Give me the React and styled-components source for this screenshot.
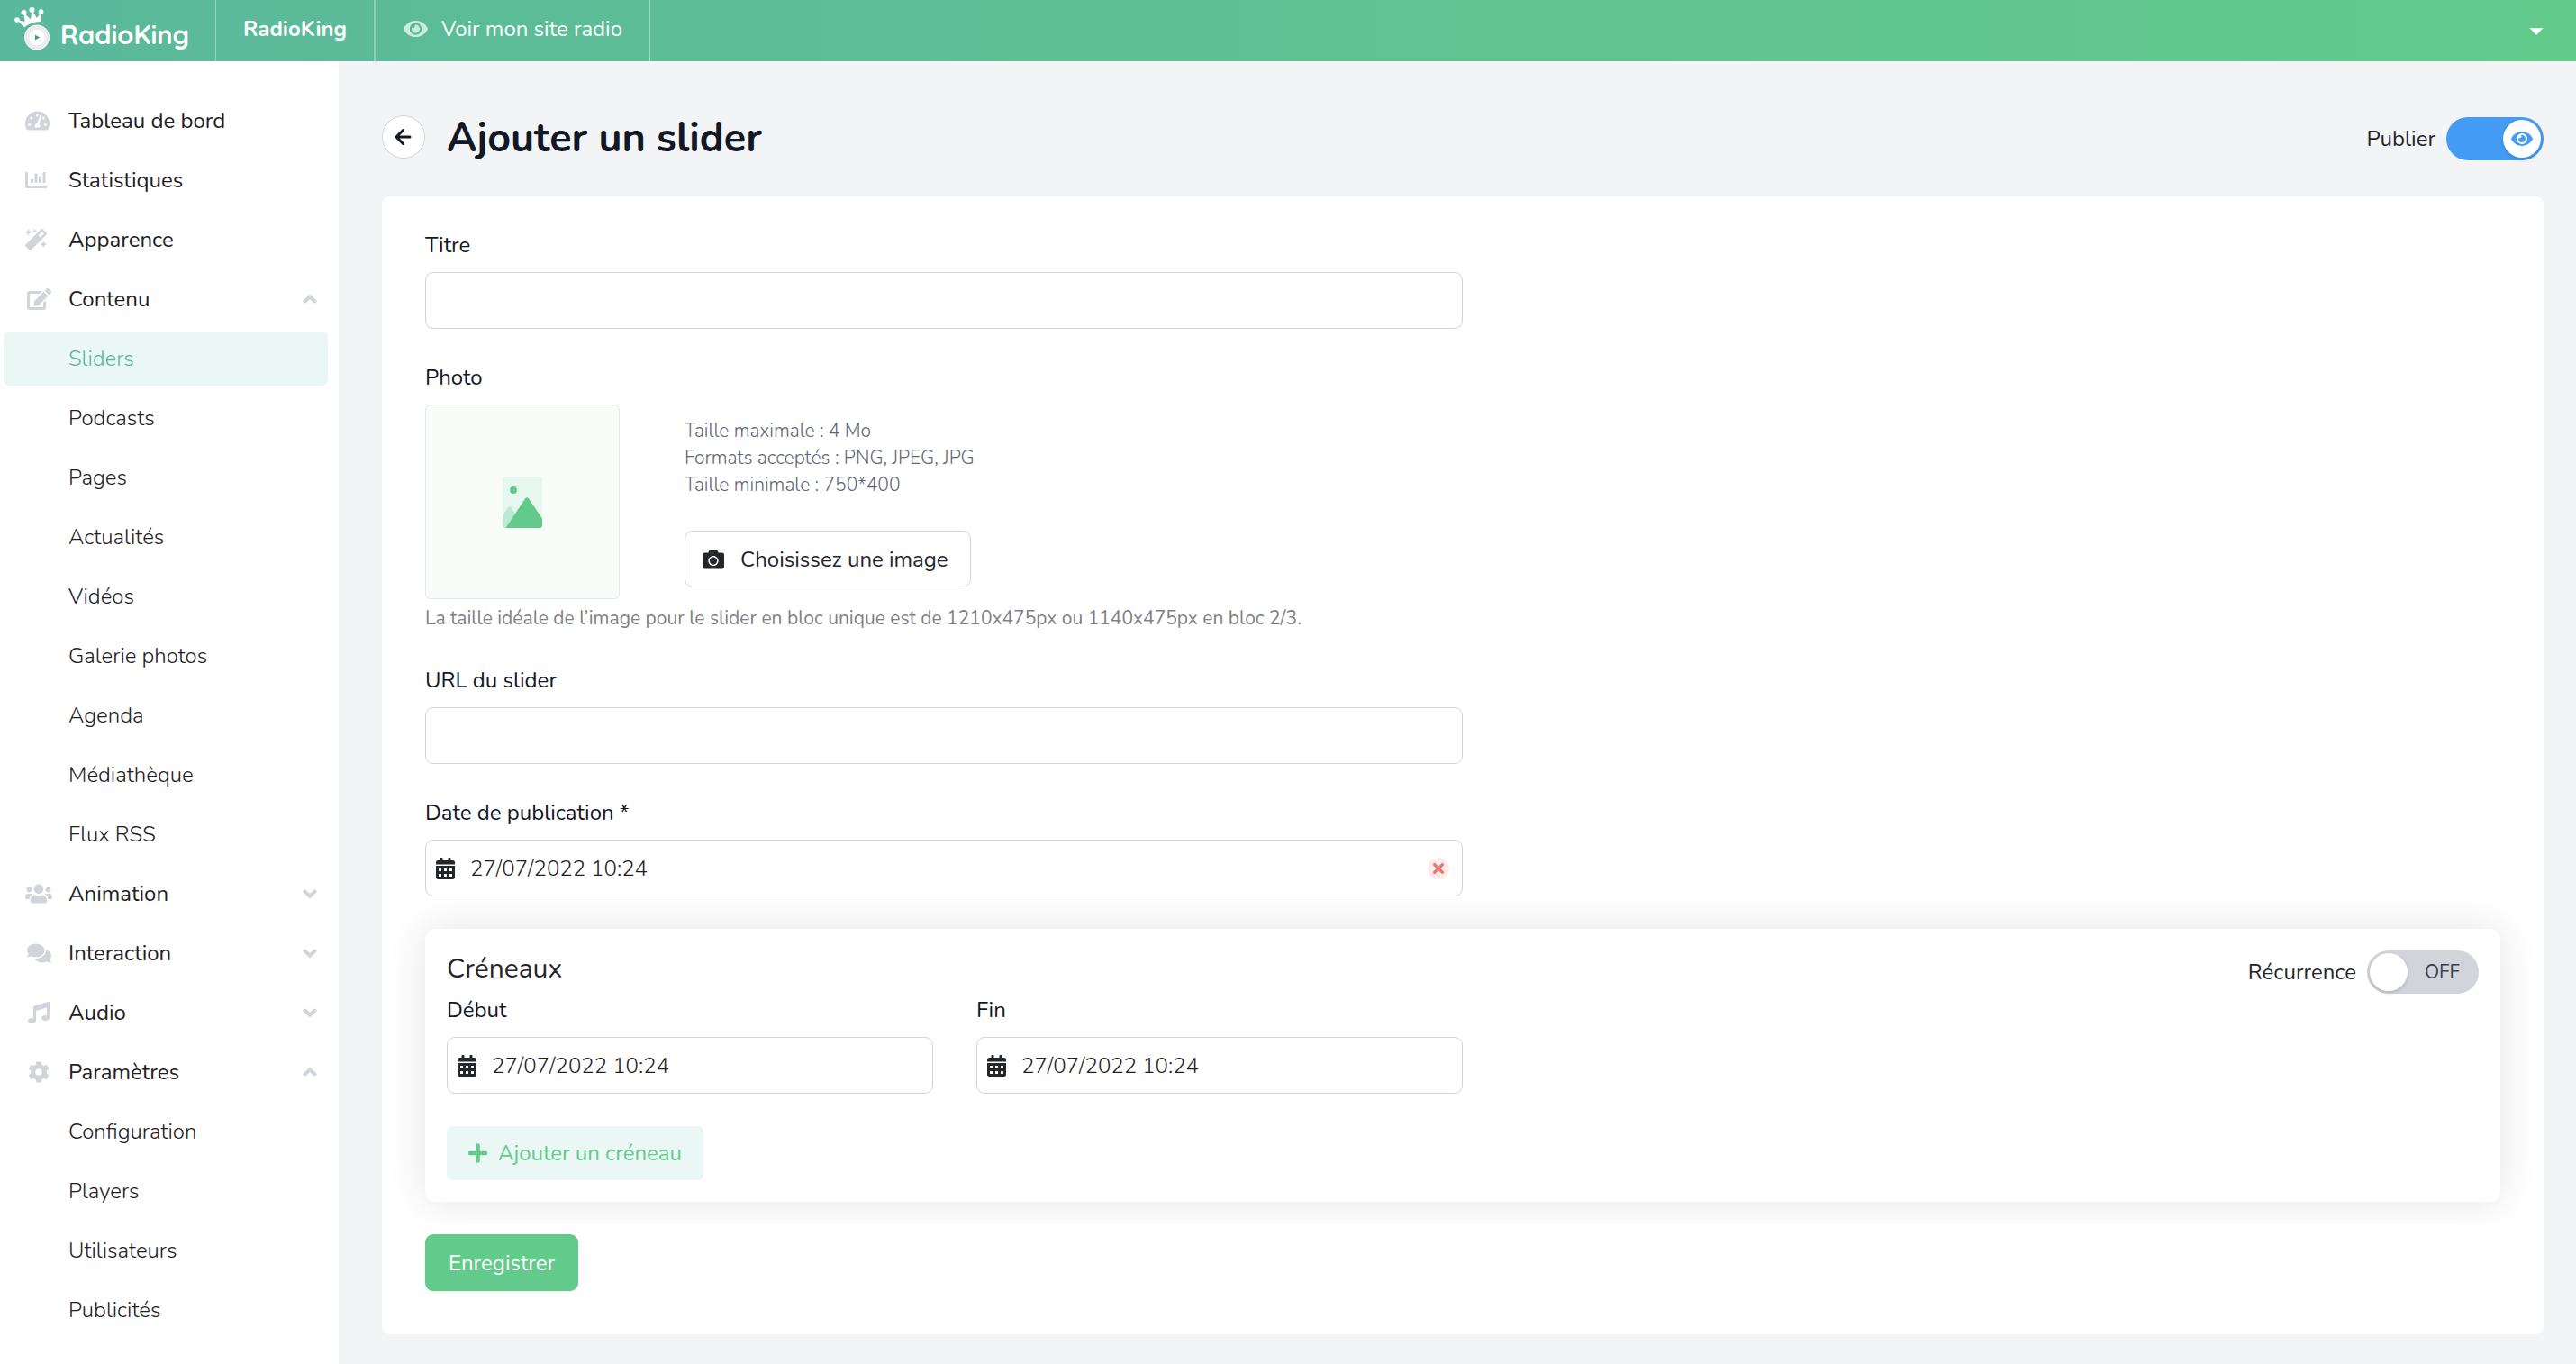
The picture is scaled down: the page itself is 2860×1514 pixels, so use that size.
import React, { useState } from 'react';
import styled, { createGlobalStyle } from 'styled-components';
import {
  FaCalendarAlt,
  FaCamera,
  FaChartBar,
  FaCog,
  FaComments,
  FaEdit,
  FaEye,
  FaMagic,
  FaMusic,
  FaPlus,
  FaTachometerAlt,
  FaTimes,
  FaUsers,
} from 'react-icons/fa';

const GlobalStyle = createGlobalStyle`
  *, *::before, *::after {
    box-sizing: border-box;
  }

  body {
    margin: 0;
    background-color: #f3f4f6;
    color: #25262b;
    font-family: Nunito, Lato, 'Liberation Sans', sans-serif;
    font-size: 24px;
    line-height: 36px;
  }

  h1, h2, p, ul {
    margin: 0;
    padding: 0;
  }

  button, input {
    font: inherit;
    color: inherit;
  }

  button {
    cursor: pointer;
  }
`;

const Page = styled.div`
  display: flex;
  flex-direction: column;
  min-height: 100vh;
`;

const TopBar = styled.header`
  display: flex;
  align-items: stretch;
  height: 68px;
  color: #ffffff;
  background: linear-gradient(90deg, #5ab99b, #62ca8b);
`;

const LogoLink = styled.a`
  display: flex;
  width: 240px;
  padding: 5px 0 0 14px;
  gap: 11px;
  border-right: 1px solid rgba(255, 255, 255, 0.35);
  color: inherit;
  font-family: Quicksand, Lato, sans-serif;
  font-size: 29px;
  font-weight: 700;
  line-height: 66px;
  text-decoration: none;

  svg {
    flex: none;
  }
`;

const StationName = styled.div`
  display: flex;
  align-items: center;
  padding: 0 30px 4px;
  border-right: 2px solid rgba(255, 255, 255, 0.3);
  font-weight: 700;
`;

const SiteLink = styled.a`
  display: flex;
  align-items: center;
  gap: 15px;
  padding: 0 30px 4px;
  border-left: 1px solid rgba(255, 255, 255, 0.3);
  border-right: 1px solid rgba(255, 255, 255, 0.4);
  color: inherit;
  text-decoration: none;

  svg {
    width: 27px;
    height: 24px;
    opacity: 0.7;
  }
`;

const AccountButton = styled.button`
  margin-left: auto;
  padding: 2px 36px 0;
  border: 0;
  background: none;
  line-height: 0;
`;

const Body = styled.div`
  display: flex;
  flex: 1;
`;

const Sidebar = styled.nav`
  flex: none;
  width: 376px;
  padding: 36px 12px 0 4px;
  background-color: #ffffff;
`;

const NavList = styled.ul`
  display: flex;
  flex-direction: column;
  gap: 6px;
  list-style: none;

  & & {
    margin-top: 6px;
  }
`;

const NavLink = styled.a`
  display: flex;
  align-items: center;
  width: 100%;
  height: 60px;
  padding: 0 12px 0 ${(props) => (props.$sub ? '72px' : '24px')};
  border: 0;
  border-radius: 6px;
  background-color: ${(props) => (props.$active ? '#ebf7f5' : 'transparent')};
  color: ${(props) => (props.$active ? '#5ab99b' : '#1f2025')};
  font-weight: ${(props) => (props.$sub ? 300 : 400)};
  text-align: left;
  text-decoration: none;
`;

const NavIcon = styled.span`
  display: flex;
  justify-content: ${(props) => (props.$center ? 'center' : 'flex-start')};
  width: 30px;
  margin-right: 18px;
  color: #d1d5db;

  svg {
    flex: none;
    width: ${(props) => props.$width || 24}px;
    height: 24px;
  }
`;

const ChevronIcon = styled.svg`
  margin-left: auto;
  transform: ${(props) => (props.$open ? 'none' : 'rotate(180deg)')};
`;

const Main = styled.main`
  flex: 1;
  min-width: 0;
  padding: 56px 36px 33px 48px;
`;

const PageHeader = styled.div`
  display: flex;
  align-items: center;
  gap: 24px;
  height: 60px;
  margin-bottom: 34px;
`;

const BackLink = styled.a`
  display: flex;
  align-items: center;
  align-self: flex-start;
  justify-content: center;
  width: 48px;
  height: 48px;
  margin-top: 4px;
  border: 1px solid #d1d5db;
  border-radius: 50%;
  background-color: #ffffff;
`;

const PageTitle = styled.h1`
  color: #131827;
  font-size: 45px;
  font-weight: 700;
  line-height: 60px;
`;

const SwitchLabel = styled.label`
  display: flex;
  align-items: center;
  gap: 12px;
  margin-left: auto;
  cursor: pointer;
`;

const Switch = styled.span`
  position: relative;
  display: flex;
  align-items: center;
  width: ${(props) => (props.$wide ? '124px' : '108px')};
  height: 48px;
`;

const SwitchInput = styled.input`
  appearance: none;
  position: absolute;
  inset: 0;
  margin: 0;
  border-radius: 24px;
  background-color: #d1d5db;
  cursor: pointer;

  &:checked {
    background-color: #449cf5;
  }
`;

const Knob = styled.span`
  position: absolute;
  top: 3px;
  ${(props) => (props.$on ? 'right' : 'left')}: 3px;
  display: flex;
  align-items: center;
  justify-content: center;
  width: 42px;
  height: 42px;
  border-radius: 50%;
  background-color: #ffffff;
  box-shadow: 0 2px 4px rgba(0, 0, 0, 0.15);
  color: #449cf5;
  pointer-events: none;

  svg {
    width: 24px;
    height: 22px;
  }
`;

const SwitchText = styled.span`
  position: absolute;
  right: 21px;
  color: #374151;
  font-size: 21px;
  line-height: 30px;
  pointer-events: none;
`;

const Card = styled.form`
  padding: 36px 48px 48px;
  border-radius: 9px;
  background-color: #ffffff;
`;

const Field = styled.div`
  display: flex;
  flex-direction: column;
  width: ${(props) => (props.$full ? 'auto' : '50%')};
  margin-bottom: 36px;
`;

const Label = styled.label`
  margin-bottom: 12px;
  color: #131827;
`;

const TextInput = styled.input`
  width: 100%;
  height: 63px;
  padding: 0 18px;
  border: 1px solid #d1d5db;
  border-radius: 9px;
  background-color: #ffffff;
`;

const DateBox = styled.div`
  display: flex;
  align-items: center;
  height: 63px;
  padding: 0 14px 0 11px;
  border: 1px solid #d1d5db;
  border-radius: 9px;
  background-color: #ffffff;

  > svg {
    flex: none;
    width: 21px;
    height: 24px;
  }
`;

const DateInput = styled.input`
  flex: 1;
  min-width: 0;
  padding: 0 17px;
  border: 0;
  background: none;
  color: #1f2025;
  font-weight: 300;
  outline: none;
`;

const ClearButton = styled.button`
  display: flex;
  align-items: center;
  justify-content: center;
  width: 24px;
  height: 24px;
  padding: 0;
  border: 0;
  border-radius: 50%;
  background-color: #fdeceb;
  color: #ef746f;

  svg {
    width: 18px;
    height: 18px;
  }
`;

const PhotoRow = styled.div`
  display: flex;
  gap: 72px;
`;

const Thumbnail = styled.div`
  display: flex;
  align-items: center;
  justify-content: center;
  width: 216px;
  height: 216px;
  border: 1px solid #e5e7eb;
  border-radius: 6px;
  background-color: #f7fcf9;
`;

const PhotoInfo = styled.div`
  display: flex;
  flex-direction: column;
  align-items: flex-start;
  padding-top: 14px;
  color: #5f6674;
  font-size: 21px;
  font-weight: 300;
  line-height: 30px;
`;

const ImageButton = styled.button`
  display: flex;
  align-items: center;
  gap: 18px;
  height: 63px;
  margin-top: 36px;
  padding: 0 24px 0 19px;
  border: 1px solid #d1d5db;
  border-radius: 9px;
  background-color: #ffffff;
  color: #25262b;
  font-size: 24px;
  font-weight: 400;
`;

const Hint = styled.p`
  margin-top: 6px;
  color: #7f8185;
  font-size: 21px;
  line-height: 30px;
`;

const SlotPanel = styled.section`
  padding: 24px;
  border-radius: 12px;
  background-color: #ffffff;
  box-shadow: 0 0 45px rgba(0, 0, 0, 0.11);
`;

const SlotHeader = styled.div`
  display: flex;
  align-items: flex-start;
  height: 48px;
`;

const SlotTitle = styled.h2`
  font-size: 30px;
  font-weight: 400;
  line-height: 42px;
`;

const SlotFields = styled.div`
  display: grid;
  grid-template-columns: 1fr 1fr;
  gap: 48px;
  width: 50%;

  ${Field} {
    width: auto;
  }
`;

const AddButton = styled.button`
  display: flex;
  align-items: center;
  gap: 12px;
  height: 60px;
  padding: 0 24px;
  border: 0;
  border-radius: 6px;
  background-color: #ebf7f5;
  color: #62ca8b;

  svg {
    width: 21px;
    height: 24px;
  }
`;

const Actions = styled.div`
  margin-top: 24px;
  padding-top: 12px;
  background-color: #ffffff;
`;

const SaveButton = styled.button`
  display: block;
  height: 63px;
  padding: 0 26px;
  border: 0;
  border-radius: 9px;
  background-color: #62ca8b;
  box-shadow: 0 1px 3px rgba(0, 0, 0, 0.08);
  color: #ffffff;
`;

const menu = [
  { label: 'Tableau de bord', icon: FaTachometerAlt, iconWidth: 27 },
  { label: 'Statistiques', icon: FaChartBar },
  { label: 'Apparence', icon: FaMagic },
  {
    label: 'Contenu',
    icon: FaEdit,
    iconWidth: 27,
    open: true,
    children: [
      'Sliders',
      'Podcasts',
      'Pages',
      'Actualités',
      'Vidéos',
      'Galerie photos',
      'Agenda',
      'Médiathèque',
      'Flux RSS',
    ],
  },
  { label: 'Animation', icon: FaUsers, iconWidth: 30, children: [] },
  { label: 'Interaction', icon: FaComments, iconWidth: 27, children: [] },
  { label: 'Audio', icon: FaMusic, children: [] },
  {
    label: 'Paramètres',
    icon: FaCog,
    open: true,
    children: ['Configuration', 'Players', 'Utilisateurs', 'Publicités'],
  },
];

const Chevron = ({ open }) => (
  <ChevronIcon $open={open} width="16" height="12" viewBox="0 0 16 12" fill="none">
    <path
      d="M2.5 8.500 8 3.200l5.500 5.300"
      stroke="#d1d5db"
      strokeWidth="4"
      strokeLinecap="round"
    />
  </ChevronIcon>
);

const CrownLogo = () => (
  <svg width="42" height="52" viewBox="14 5 42 52" fill="#ffffff">
    <path d="M19 22 L27 30.500 Q35 23.500 46 24 L46 13 L41 20 L35.500 11 L34 21.500 L26.500 14 L27.500 24 Z" />
    <circle cx="19" cy="22" r="2.800" />
    <circle cx="26.500" cy="14" r="3" />
    <circle cx="35.500" cy="11" r="3" />
    <circle cx="45.500" cy="13" r="2.800" />
    <circle cx="41" cy="41.500" r="14" fill="#f1f1f1" />
    <circle cx="41" cy="41.500" r="12" fill="none" stroke="#dedede" strokeWidth="0.600" />
    <circle cx="41" cy="41.500" r="10" fill="none" stroke="#e2e2e2" strokeWidth="0.600" />
    <circle cx="41" cy="41.500" r="8.500" />
    <path d="M39 38.800v5.600l5.200-2.800z" fill="#3f9e80" />
  </svg>
);

const PicturePlaceholder = () => (
  <svg width="44" height="57" viewBox="0 0 44 57">
    <rect width="44" height="57" rx="3" fill="#e5f7ee" />
    <circle cx="12" cy="15" r="4" fill="#62ca8b" />
    <path d="M0 43 6 34.500q2-2.500 4 0L15 43 5 57H3q-3 0-3-3z" fill="#bcead1" />
    <path d="M3.500 57 25 24.500q2-2.500 4 0L44 46.500V54q0 3-3 3z" fill="#62ca8b" />
  </svg>
);

const Menu = () => {
  const [opened, setOpened] = useState(
    menu.filter((item) => item.open).map((item) => item.label)
  );

  const toggle = (label) =>
    setOpened((list) =>
      list.includes(label) ? list.filter((l) => l !== label) : [...list, label]
    );

  return (
    <Sidebar aria-label="Menu">
      <NavList>
        {menu.map(({ label, icon: Icon, iconWidth, children }) => {
          const open = opened.includes(label);
          return (
            <li key={label}>
              {children ? (
                <NavLink
                  as="button"
                  type="button"
                  aria-expanded={open}
                  onClick={() => toggle(label)}
                >
                  <NavIcon $center $width={iconWidth}>
                    <Icon />
                  </NavIcon>
                  {label}
                  <Chevron open={open} />
                </NavLink>
              ) : (
                <NavLink href="#">
                  <NavIcon $width={iconWidth}>
                    <Icon />
                  </NavIcon>
                  {label}
                </NavLink>
              )}
              {open && children.length > 0 && (
                <NavList>
                  {children.map((child) => (
                    <li key={child}>
                      <NavLink href="#" $sub $active={child === 'Sliders'}>
                        {child}
                      </NavLink>
                    </li>
                  ))}
                </NavList>
              )}
            </li>
          );
        })}
      </NavList>
    </Sidebar>
  );
};

const DateField = ({ id, label, clearable }) => {
  const [value, setValue] = useState('27/07/2022 10:24');

  return (
    <Field>
      <Label htmlFor={id}>{label}</Label>
      <DateBox>
        <FaCalendarAlt />
        <DateInput
          id={id}
          type="text"
          value={value}
          onChange={(e) => setValue(e.target.value)}
        />
        {clearable && (
          <ClearButton type="button" aria-label="Effacer" onClick={() => setValue('')}>
            <FaTimes />
          </ClearButton>
        )}
      </DateBox>
    </Field>
  );
};

const App = () => {
  const [published, setPublished] = useState(true);
  const [recurring, setRecurring] = useState(false);

  return (
    <Page>
      <GlobalStyle />
      <TopBar>
        <LogoLink href="#">
          <CrownLogo />
          <span>RadioKing</span>
        </LogoLink>
        <StationName>RadioKing</StationName>
        <SiteLink href="#">
          <FaEye />
          Voir mon site radio
        </SiteLink>
        <AccountButton type="button" aria-label="Compte">
          <svg width="16" height="8" viewBox="0 0 16 8" fill="#ffffff">
            <path d="M0.500 0h15L8 8z" />
          </svg>
        </AccountButton>
      </TopBar>
      <Body>
        <Menu />
        <Main>
          <PageHeader>
            <BackLink href="#" aria-label="Retour">
              <svg width="20" height="20" viewBox="0 0 20 20" fill="none">
                <path
                  d="M9.500 2.500 2 10l7.500 7.500M2 10H17"
                  stroke="#131827"
                  strokeWidth="3"
                  strokeLinecap="round"
                  strokeLinejoin="round"
                />
              </svg>
            </BackLink>
            <PageTitle>Ajouter un slider</PageTitle>
            <SwitchLabel>
              Publier
              <Switch>
                <SwitchInput
                  type="checkbox"
                  checked={published}
                  onChange={(e) => setPublished(e.target.checked)}
                />
                <Knob $on={published}>
                  <FaEye />
                </Knob>
              </Switch>
            </SwitchLabel>
          </PageHeader>
          <Card onSubmit={(e) => e.preventDefault()}>
            <Field>
              <Label htmlFor="title">Titre</Label>
              <TextInput id="title" type="text" />
            </Field>
            <Field $full>
              <Label htmlFor="photo">Photo</Label>
              <PhotoRow>
                <Thumbnail>
                  <PicturePlaceholder />
                </Thumbnail>
                <PhotoInfo>
                  <p>Taille maximale : 4 Mo</p>
                  <p>Formats acceptés : PNG, JPEG, JPG</p>
                  <p>Taille minimale : 750*400</p>
                  <ImageButton id="photo" type="button">
                    <FaCamera />
                    Choisissez une image
                  </ImageButton>
                </PhotoInfo>
              </PhotoRow>
              <Hint>
                La taille idéale de l’image pour le slider en bloc unique est de 1210x475px
                ou 1140x475px en bloc 2/3.
              </Hint>
            </Field>
            <Field>
              <Label htmlFor="url">URL du slider</Label>
              <TextInput id="url" type="text" />
            </Field>
            <DateField id="publication" label="Date de publication *" clearable />
            <SlotPanel>
              <SlotHeader>
                <SlotTitle>Créneaux</SlotTitle>
                <SwitchLabel>
                  Récurrence
                  <Switch $wide>
                    <SwitchInput
                      type="checkbox"
                      checked={recurring}
                      onChange={(e) => setRecurring(e.target.checked)}
                    />
                    <Knob $on={recurring} />
                    {!recurring && <SwitchText>OFF</SwitchText>}
                  </Switch>
                </SwitchLabel>
              </SlotHeader>
              <SlotFields>
                <DateField id="start" label="Début" />
                <DateField id="end" label="Fin" />
              </SlotFields>
              <AddButton type="button">
                <FaPlus />
                Ajouter un créneau
              </AddButton>
            </SlotPanel>
            <Actions>
              <SaveButton type="submit">Enregistrer</SaveButton>
            </Actions>
          </Card>
        </Main>
      </Body>
    </Page>
  );
};

export default App;
